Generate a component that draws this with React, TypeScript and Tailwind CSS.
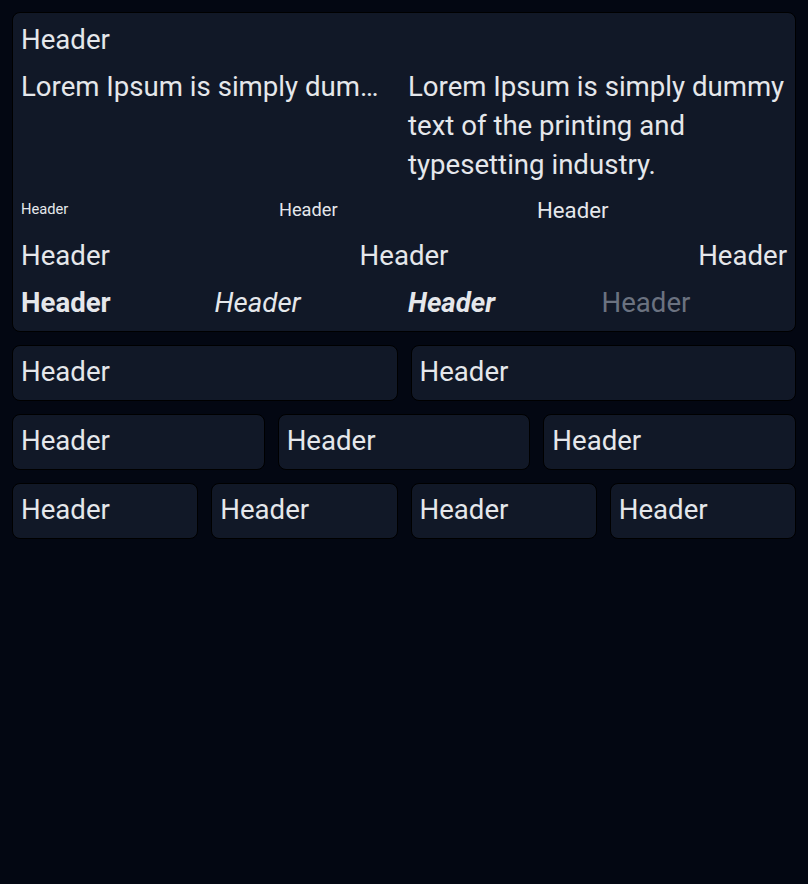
import React from "react";

const Card = ({ children }: { children: React.ReactNode }) => (
  <div className="rounded-lg border border-black bg-[#111827] px-2 pt-[6px] pb-[9px] text-[27.6px] leading-[39px]">
    {children}
  </div>
);

export default function App() {
  return (
    <div className="min-h-screen bg-[#030712] p-3 flex flex-col gap-[13px] font-['Roboto',sans-serif] text-[#e5e7eb]">
      <div className="rounded-lg border border-black bg-[#111827] px-2 pt-[7px] pb-[9px] flex flex-col gap-2 text-[27.6px] leading-[39px]">
        <div>Header</div>
        <div className="grid grid-cols-2 gap-2">
          <p className="truncate">
            Lorem Ipsum is simply dummy text of the printing and typesetting industry.
          </p>
          <p>Lorem Ipsum is simply dummy text of the printing and typesetting industry.</p>
        </div>
        <div className="grid grid-cols-3 gap-2 h-[35px] mt-[1px] items-start">
          <div className="text-[14.7px] leading-[32px]">Header</div>
          <div className="text-[18.2px] leading-[34px]">Header</div>
          <div className="text-[22.2px] leading-[35px]">Header</div>
        </div>
        <div className="grid grid-cols-3 gap-2">
          <div className="text-left">Header</div>
          <div className="text-center">Header</div>
          <div className="text-right">Header</div>
        </div>
        <div className="grid grid-cols-4 gap-2">
          <div className="font-bold">Header</div>
          <div className="italic">Header</div>
          <div className="font-bold italic">Header</div>
          <div className="text-[#6b7280]">Header</div>
        </div>
      </div>
      <div className="grid grid-cols-2 gap-[13px]">
        <Card>Header</Card>
        <Card>Header</Card>
      </div>
      <div className="grid grid-cols-3 gap-[13px]">
        <Card>Header</Card>
        <Card>Header</Card>
        <Card>Header</Card>
      </div>
      <div className="grid grid-cols-4 gap-[13px]">
        <Card>Header</Card>
        <Card>Header</Card>
        <Card>Header</Card>
        <Card>Header</Card>
      </div>
    </div>
  );
}
